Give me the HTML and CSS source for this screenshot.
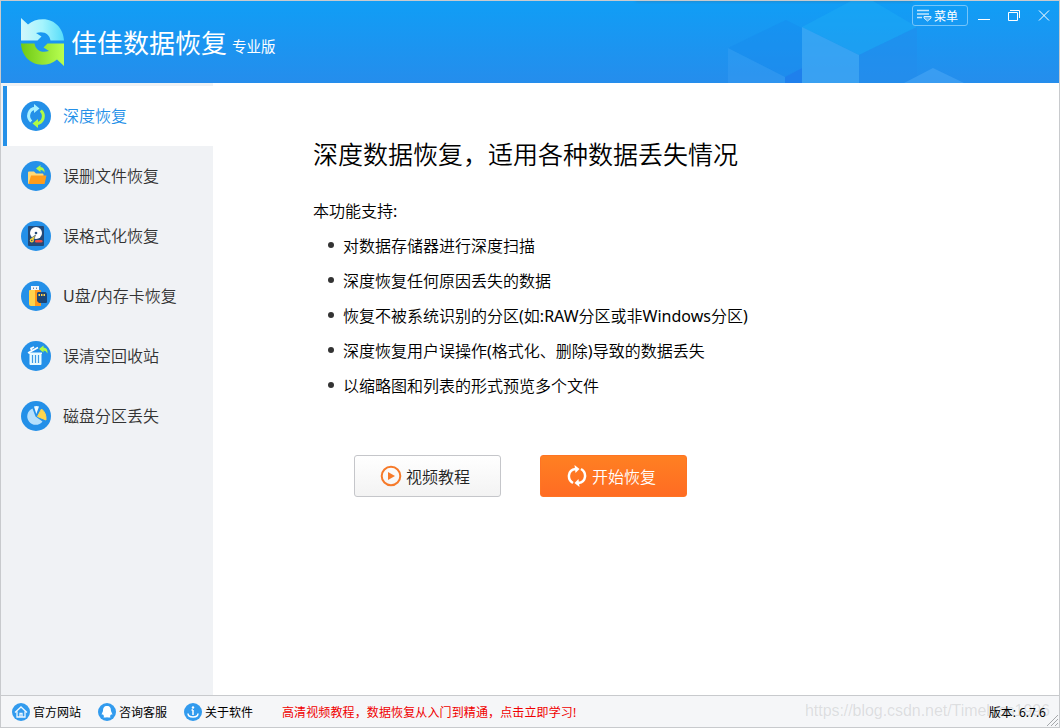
FILE: index.html
```html
<!DOCTYPE html>
<html lang="zh-CN">
<head>
    <meta charset="UTF-8">
    <meta name="viewport" content="width=device-width, initial-scale=1.0">
    <title>佳佳数据恢复 专业版</title>
    <link rel="stylesheet" href="styles.css">
</head>
<body>
    <!-- Header -->
    <header class="header">
        <svg class="header-cubes" width="332" height="82" viewBox="728 1 332 82">
            <path d="M728 48 786 20 802 28V68L785 77Z" fill="#1689ee" opacity=".4"/>
            <path d="M728 48 785 77V83H728Z" fill="#45a6f4" opacity=".3"/>
            <path d="M785 77 802 68V83H785Z" fill="#1f80ec"/>
            <path d="M802 27 851 1H873L917 27 859 55Z" fill="#1fb0f4" opacity=".4"/>
            <path d="M802 27 859 55V83H802Z" fill="#48aef5" opacity=".6"/>
            <path d="M859 55 917 27V83H859Z" fill="#248cec" opacity=".45"/>
            <path d="M904 83 933 68 964 83Z" fill="#43a3f3" opacity=".7"/>
        </svg>
        <div class="brand">
            <svg class="logo" width="44" height="49" viewBox="0 0 44 49">
                <defs>
                    <linearGradient id="ice" x1="0" y1="0" x2="1" y2="0">
                        <stop offset="0" stop-color="#d2f7fb"/>
                        <stop offset=".5" stop-color="#a5f4fd"/>
                        <stop offset="1" stop-color="#55dcfa"/>
                    </linearGradient>
                    <linearGradient id="leaf" x1="0" y1="0" x2="1" y2="0">
                        <stop offset="0" stop-color="#6fc914"/>
                        <stop offset="1" stop-color="#b8ff50"/>
                    </linearGradient>
                </defs>
                <path d="M0 0 7 6.500C11 3 16 1.300 22 1.300 34 1.300 42.500 11 43 22.500H29.500C28.500 16 23 12.500 15 15L20.500 18.500 16.500 22.500H0Z" fill="url(#ice)"/>
                <path d="M43 48 36 41.500C32 45 27 46.700 21 46.700 9 46.700.500 37 0 25.500H13.500C14.500 32 20 35.500 28 33L22.500 29.500 26.500 25.500H43Z" fill="url(#leaf)"/>
            </svg>
            <h1 class="brand-name">佳佳数据恢复</h1>
            <span class="brand-edition">专业版</span>
        </div>
        <div class="window-controls">
            <button class="menu-button">
                <svg width="15" height="13" viewBox="0 0 15 13">
                    <path d="M0 1.500H12M0 5H12M0 8.500H5" stroke="#c3e6fd" stroke-width="1.600"/>
                    <path d="M7 7.500H14V9L10.500 12 7 9Z" fill="#5fb8f6" stroke="#d9f0fe"/>
                </svg>
                菜单
            </button>
            <svg class="control-icons" width="72" height="12" viewBox="0 0 72 12" fill="none" stroke="#fff">
                <path d="M0 9.500H12M30.500 2.500H39.500V10.500H30.500ZM32 .500H41.500V8"/>
                <path d="M61 .500 71 10.500M71 .500 61 10.500"/>
            </svg>
        </div>
    </header>

    <!-- Main Content -->
    <div class="main-container">
        <nav class="sidebar">
            <a class="nav-item active">
                <svg width="30" height="30" viewBox="0 0 30 30">
                    <circle cx="15" cy="15" r="15" fill="#2490e8"/>
                    <path d="M10.200 20.500C5.500 16 7.500 8 14.500 7.300" fill="none" stroke="#a8f1ff" stroke-width="3"/>
                    <path d="M13 3 18.500 7.500 13 12Z" fill="#a8f1ff"/>
                    <path d="M19.800 9.500C24.500 14 22.500 22 15.500 22.700" fill="none" stroke="#b0fa45" stroke-width="3"/>
                    <path d="M17 18V27L11.500 22.500Z" fill="#b0fa45"/>
                </svg>
                <span class="nav-label">深度恢复</span>
            </a>
            <a class="nav-item">
                <svg width="30" height="30" viewBox="0 0 30 30">
                    <circle cx="15" cy="15" r="15" fill="#2490e8"/>
                    <path d="M7 11.500Q7 10.500 8 10.500H13L15 12.500H21.500Q22.500 12.500 22.500 13.500V23H8Q7 23 7 22Z" fill="#ffd978"/>
                    <path d="M10 14.500H25.500L23.500 23H7.500Z" fill="#ff9c1c"/>
                    <path d="M15 7.500 19.500 4V6Q24 6.500 23.500 12 22.500 9 19.500 9V11Z" fill="#b0fa45"/>
                </svg>
                <span class="nav-label">误删文件恢复</span>
            </a>
            <a class="nav-item">
                <svg width="30" height="30" viewBox="0 0 30 30">
                    <circle cx="15" cy="15" r="15" fill="#2490e8"/>
                    <rect x="7" y="5" width="16" height="20" rx="1" fill="#234a79"/>
                    <circle cx="15" cy="12" r="6" fill="#fff"/>
                    <circle cx="15" cy="12" r="1.300" fill="#234a79"/>
                    <path d="M14.500 14 9 18V21H12Z" fill="#f5d33c" stroke="#234a79" stroke-width=".6"/>
                    <circle cx="10.800" cy="19.500" r="2" fill="#f5d33c"/>
                    <circle cx="10.800" cy="19.500" r=".7" fill="#234a79"/>
                    <rect x="14" y="19" width="7.500" height="2.500" rx="1.200" fill="#f04c45"/>
                </svg>
                <span class="nav-label">误格式化恢复</span>
            </a>
            <a class="nav-item">
                <svg width="30" height="30" viewBox="0 0 30 30">
                    <circle cx="15" cy="15" r="15" fill="#2490e8"/>
                    <rect x="10" y="5" width="8" height="5" fill="#f2f7fc"/>
                    <path d="M12 6.500H13V8H12ZM15 6.500H16V8H15Z" fill="#76879a"/>
                    <path d="M8 10Q8 9 9 9H14V25H10Q8 25 8 23Z" fill="#ffd34d"/>
                    <path d="M14 9H19Q20 9 20 10V25H14Z" fill="#ff981c"/>
                    <path d="M17 11H24.500L26 12.500V21Q26 22 25 22H18L16 20V12Z" fill="#1c4677"/>
                    <path d="M17.500 13H19V15H17.500ZM20 13H21.500V15H20ZM22.500 13H24V15H22.500Z" fill="#ffd34d"/>
                </svg>
                <span class="nav-label"><span class="latin">U</span>盘<span class="latin">/</span>内存卡恢复</span>
            </a>
            <a class="nav-item">
                <svg width="30" height="30" viewBox="0 0 30 30">
                    <circle cx="15" cy="15" r="15" fill="#2490e8"/>
                    <path d="M7 12 17 6.500M10.500 9 10 7.500 13 6" fill="none" stroke="#fff" stroke-width="1.700"/>
                    <path d="M8 11.500H21V13H20.500V23Q20.500 24 19.500 24H9.500Q8.500 24 8.500 23V13H8Z" fill="#e8fbff"/>
                    <path d="M11.500 14V22M14.500 14V22M17.500 14V22" stroke="#3c9ce6" stroke-width="1.200"/>
                    <path d="M18 8 22.500 4.500V6.500Q27 6.500 26.500 12.500 25 9.500 22.500 9.500V11.500Z" fill="#b0fa45"/>
                </svg>
                <span class="nav-label">误清空回收站</span>
            </a>
            <a class="nav-item">
                <svg width="30" height="30" viewBox="0 0 30 30">
                    <circle cx="15" cy="15" r="15" fill="#2490e8"/>
                    <path d="M14.500 15.500 11.500 7.500A8.500 8.500 0 1 0 21.500 20.500Z" fill="#b5dffc"/>
                    <path d="M15.300 13 13 5.500Q15.500 4.500 18 5.500Z" fill="#effaff"/>
                    <path d="M16.500 15.500 20.500 8Q25.500 12 25 19Z" fill="#ffd64d" stroke="#ffd64d" stroke-linejoin="round"/>
                </svg>
                <span class="nav-label">磁盘分区丢失</span>
            </a>
        </nav>

        <main class="content">
            <h2 class="content-title">深度数据恢复，适用各种数据丢失情况</h2>
            <p class="content-intro">本功能支持<span class="latin">:</span></p>
            <ul class="feature-list">
                <li><p>对数据存储器进行深度扫描</p></li>
                <li><p>深度恢复任何原因丢失的数据</p></li>
                <li><p>恢复不被系统识别的分区<span class="latin">(</span>如<span class="latin">:RAW</span>分区或非<span class="latin">Windows</span>分区<span class="latin">)</span></p></li>
                <li><p>深度恢复用户误操作<span class="latin">(</span>格式化、删除<span class="latin">)</span>导致的数据丢失</p></li>
                <li><p>以缩略图和列表的形式预览多个文件</p></li>
            </ul>
            <div class="actions">
                <button class="action-button video-button">
                    <svg width="22" height="22" viewBox="0 0 22 22">
                        <circle cx="11" cy="11" r="9.300" fill="none" stroke="#f67a2a" stroke-width="2"/>
                        <path d="M8 7 15 11 8 15Z" fill="#f67a2a"/>
                    </svg>
                    视频教程
                </button>
                <button class="action-button start-button">
                    <svg width="20" height="24" viewBox="0 0 20 24">
                        <path d="M6 19C0 15.500 .500 6 8.500 5M14 5C20 8.500 19.500 18 11.500 19" fill="none" stroke="#fff" stroke-width="2.500"/>
                        <path d="M7.500 1 12.500 5 8.500 9ZM12.500 23 7.500 19 11.500 15Z" fill="#fff"/>
                    </svg>
                    开始恢复
                </button>
            </div>
        </main>
    </div>

    <!-- Footer -->
    <footer class="footer">
        <a class="footer-link">
            <svg width="18" height="18" viewBox="0 0 18 18">
                <circle cx="9" cy="9" r="9" fill="#329bee"/>
                <path d="M3 9.500 9 4 15 9.500M5 8.500V14H13V8.500M8 14V10.500H10V14" fill="none" stroke="#eef8ff" stroke-width="1.300"/>
            </svg>
            官方网站
        </a>
        <a class="footer-link">
            <svg width="18" height="18" viewBox="0 0 18 18">
                <circle cx="9" cy="9" r="9" fill="#329bee"/>
                <path d="M9 3C6 3 5 5 5 8L3.500 11.500 5 11.500 6 13 5.500 14.500H8.500L9 14 9.500 14.500H12.500L12 13 13 11.500 14.500 11.500 13 8C13 5 12 3 9 3Z" fill="#fff"/>
            </svg>
            咨询客服
        </a>
        <a class="footer-link">
            <svg width="18" height="18" viewBox="0 0 18 18">
                <circle cx="9" cy="9" r="9" fill="#329bee"/>
                <path d="M9 7V12M7.500 7H9M4 10.500Q4 14 9 14T14 10.500" fill="none" stroke="#fff" stroke-width="1.500"/>
                <circle cx="9" cy="4.500" r="1.200" fill="#fff"/>
            </svg>
            关于软件
        </a>
        <a class="promo">高清视频教程，数据恢复从入门到精通，点击立即学习!</a>
        <span class="watermark">https://blog.csdn.net/Timeless1996</span>
        <span class="version">版本: 6.7.6</span>
        <svg class="resize-grip" width="11" height="11" viewBox="0 0 11 11">
            <path d="M0 11 11 0M4 11 11 4M8 11 11 8" stroke="#a5a8ab"/>
        </svg>
    </footer>
</body>
</html>
```

FILE: styles.css
```css
* {
    margin: 0;
    padding: 0;
    box-sizing: border-box;
}

body {
    width: 1060px;
    height: 728px;
    display: flex;
    flex-direction: column;
    overflow: hidden;
    background: #fff;
    border: 1px solid #c8cacd;
    font-family: "Noto Sans", "Noto Sans CJK SC", sans-serif;
    font-size: 16px;
    font-weight: 350;
    color: #000;
}

button {
    font: inherit;
}

svg {
    display: block;
    flex-shrink: 0;
}

.latin {
    font-weight: 400;
}

/* Header Styles */
.header {
    position: relative;
    display: flex;
    justify-content: space-between;
    height: 82px;
    background: linear-gradient(#109ef6, #258dec);
    color: #fff;
}

.header::before {
    content: "";
    position: absolute;
    top: -1px;
    left: 635px;
    width: 277px;
    height: 1px;
    background: #8d9296;
    box-shadow: 0 0 3px #45657d;
}

.header-cubes {
    position: absolute;
    top: 0;
    right: -1px;
}

.brand {
    display: flex;
    align-items: flex-start;
    padding: 17px 0 0 20px;
}

.brand-name {
    margin-left: 6px;
    font-size: 26px;
    line-height: 50px;
    font-weight: 400;
}

.brand-edition {
    margin-left: 5px;
    padding-top: 5px;
    font-size: 14.5px;
    line-height: 47px;
    font-weight: 400;
}

.window-controls {
    position: relative;
    display: flex;
    align-items: flex-start;
    padding: 4px 9px 0 0;
}

.menu-button {
    display: flex;
    align-items: center;
    gap: 2px;
    width: 56px;
    height: 21px;
    padding-left: 4px;
    background: none;
    border: 1px solid #75c5fa;
    border-radius: 3px;
    color: #fff;
    font-size: 12px;
    font-weight: 400;
    white-space: nowrap;
}

.control-icons {
    margin: 5px 0 0 10px;
}

/* Main Content Styles */
.main-container {
    display: flex;
    flex: 1;
}

.sidebar {
    width: 212px;
    padding: 3px 0 0 2px;
    background: #f0f2f5;
}

.nav-item {
    display: flex;
    align-items: center;
    gap: 12px;
    height: 60px;
    padding-left: 18px;
    color: #333;
}

.nav-label {
    padding-bottom: 2px;
}

.nav-item.active {
    padding-left: 14px;
    background: #fff;
    border-left: 4px solid #2490e8;
    color: #2490e8;
}

.content {
    flex: 1;
    padding: 51px 0 0 100px;
}

.content-title {
    font-size: 25px;
    line-height: 40px;
    font-weight: 350;
}

.content-intro {
    margin-top: 25px;
    line-height: 24px;
}

.feature-list {
    margin-top: 5px;
    list-style: none;
}

.feature-list li {
    display: flex;
    align-items: center;
    height: 35px;
    padding: 0 0 1px 15px;
}

.feature-list li::before {
    content: "";
    width: 6px;
    height: 6px;
    margin: -1px 9px 0 0;
    background: #333;
    border-radius: 50%;
}

.actions {
    display: flex;
    gap: 39px;
    margin: 52px 0 0 41px;
}

.action-button {
    display: flex;
    align-items: center;
    width: 147px;
    height: 42px;
    padding-left: 25px;
    border: 1px solid #c5c6ca;
    border-radius: 3px;
}

.video-button {
    gap: 4px;
    background: linear-gradient(#fff, #f3f3f3);
    color: #222;
}

.start-button {
    gap: 5px;
    padding-left: 26px;
    background: linear-gradient(#ff8022, #ff6c23);
    border-color: #ff7423;
    color: #fff;
}

/* Footer Styles */
.footer {
    position: relative;
    display: flex;
    align-items: center;
    height: 32px;
    padding: 1px 13px 0 11px;
    background: #f5f6f8;
    border-top: 1px solid #c8cacd;
    font-size: 12px;
    font-weight: 400;
}

.footer-link {
    display: flex;
    align-items: center;
    gap: 3px;
    width: 86px;
}

.promo {
    margin-left: 12px;
    color: #f00000;
    letter-spacing: 0.12px;
}

.version {
    position: relative;
    margin-left: auto;
}

.watermark {
    position: absolute;
    top: 5px;
    left: 804px;
    color: rgba(120, 120, 120, 0.2);
    font-family: "Liberation Sans", sans-serif;
    font-size: 16px;
    line-height: 20px;
    letter-spacing: -0.05px;
}

.resize-grip {
    position: absolute;
    right: 1px;
    bottom: 1px;
}
```
